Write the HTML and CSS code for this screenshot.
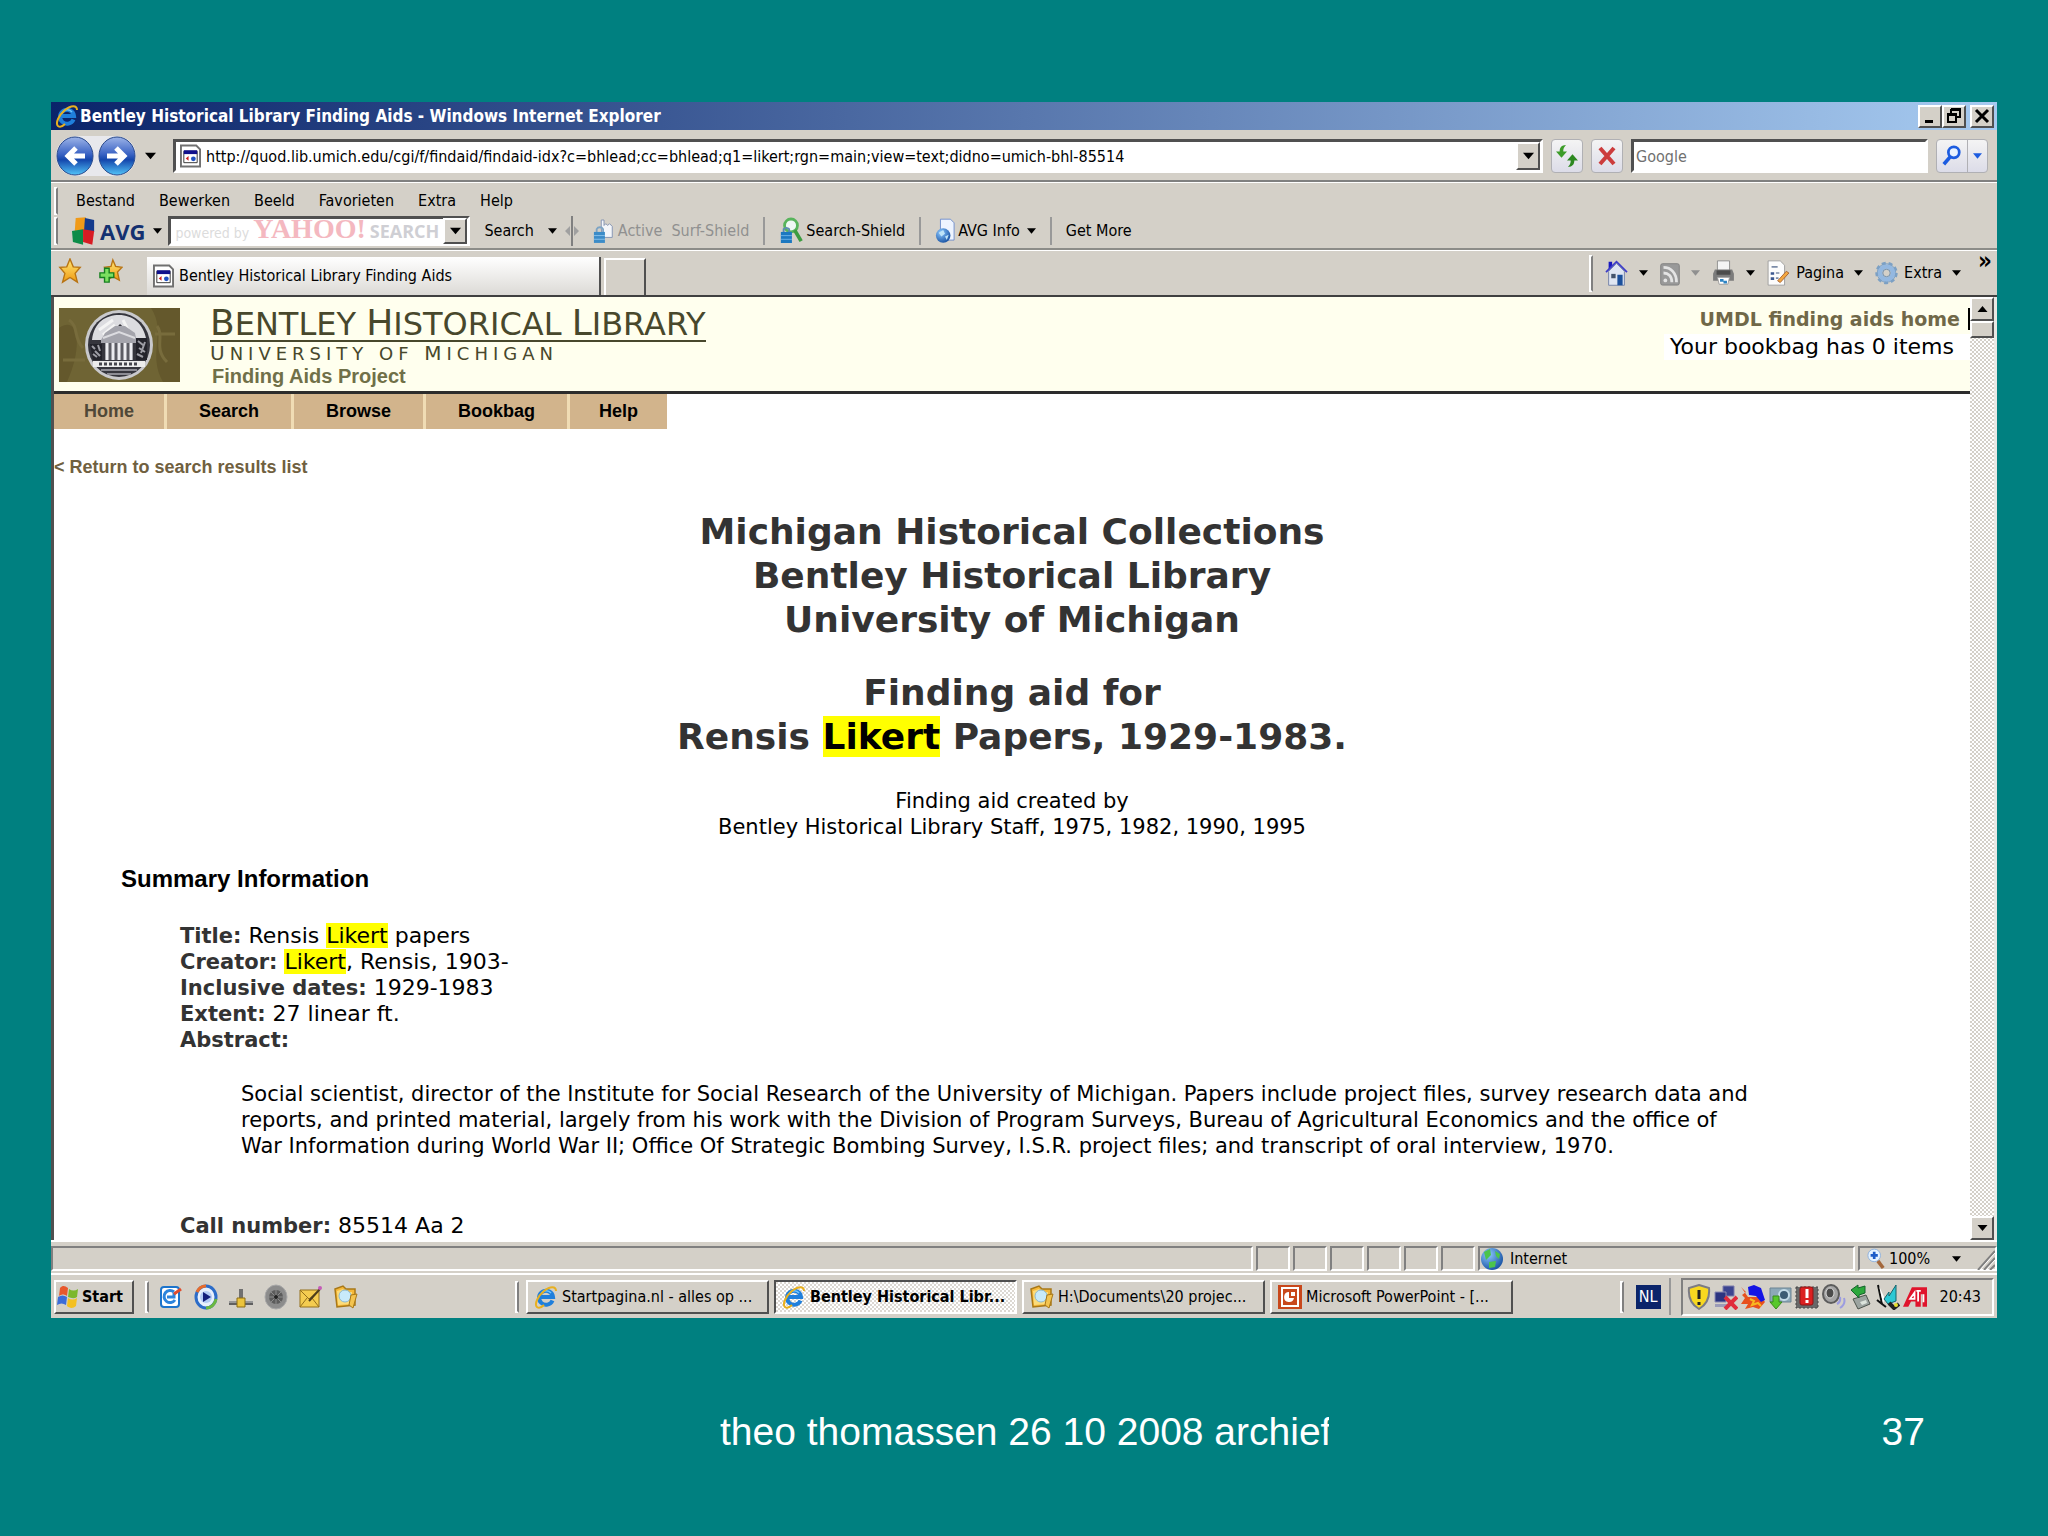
FILE: index.html
```
<!DOCTYPE html>
<html lang="nl">
<head>
<meta charset="UTF-8">
<meta name="viewport" content="width=device-width, initial-scale=1.0">
<title>Bentley Historical Library Finding Aids</title>
<link rel="stylesheet" href="styles.css">
</head>
<body>

<!-- shared icons -->
<svg class="defs" aria-hidden="true">
  <defs>
    <linearGradient id="orb" x1="0" y1="0" x2="0" y2="1">
      <stop offset="0" stop-color="#9db4e8"/>
      <stop offset="0.45" stop-color="#3a63c4"/>
      <stop offset="0.6" stop-color="#1446ac"/>
      <stop offset="1" stop-color="#52c4f8"/>
    </linearGradient>
    <linearGradient id="gold" x1="0" y1="0" x2="0" y2="1">
      <stop offset="0" stop-color="#ffe878"/>
      <stop offset="1" stop-color="#f09a10"/>
    </linearGradient>
    <radialGradient id="globe" cx="0.35" cy="0.3" r="0.8">
      <stop offset="0" stop-color="#8cc8ff"/>
      <stop offset="1" stop-color="#104a9c"/>
    </radialGradient>
  </defs>
  <symbol id="ie" viewBox="0 0 24 24">
    <path d="M18.5 15.5A7 7 0 1 1 19 12H7" fill="none" stroke="#1f7fdc" stroke-width="4"/>
    <path d="M17 8A6 6 0 0 0 7 9" fill="none" stroke="#6fc6ff" stroke-width="1.5"/>
    <path d="M22 6C22 1 16 1 10 6C4 11 0 19 3 22C5 23.500 8 22 10 20" fill="none" stroke="#e8b020" stroke-width="2"/>
  </symbol>
  <symbol id="page" viewBox="0 0 22 24">
    <path d="M1 1H17L21 5V23H1Z" fill="#fff" stroke="#707070" stroke-width="2"/>
    <path d="M4 7H18V19H4Z" fill="#fff" stroke="#333" stroke-width="1"/>
    <path d="M4 6H18V10H4Z" fill="#10108c"/>
    <path d="M9 12V17L6 14.500Z" fill="#d02020"/>
    <circle cx="14" cy="15" r="2.500" fill="#2050c0"/>
  </symbol>
  <symbol id="folder" viewBox="0 0 24 24">
    <path d="M1 4L9 1L12 4L21 4V20L3 22Z" fill="#f6b838" stroke="#a87818" stroke-width="1.500"/>
    <path d="M3 6L9 4L12 7L18 7V19L4 20Z" fill="#fbdc7c"/>
    <circle cx="11" cy="11" r="6" fill="#c8eafa" stroke="#8cb8d0"/>
    <path d="M23 9L19 23L15 20L17 10Z" fill="#f4c450" stroke="#a87818"/>
  </symbol>
  <symbol id="down" viewBox="0 0 10 6">
    <path d="M0 0H10L5 6Z" fill="currentColor"/>
  </symbol>
</svg>

<div class="window">

  <header class="titlebar">
    <svg class="icon"><use href="#ie"/></svg>
    <h1 class="window-title">Bentley Historical Library Finding Aids - Windows Internet Explorer</h1>
    <div class="window-buttons">
      <button class="raised" aria-label="Minimaliseren"><svg width="18" height="18" viewBox="0 0 18 18"><path d="M4 13H12V16H4Z"/></svg></button>
      <button class="raised" aria-label="Verkleinen"><svg width="18" height="18" viewBox="0 0 18 18"><path d="M6 2H15V10H12M6 2V6M6 3H15" fill="none" stroke="#000" stroke-width="2"/><path d="M3 7H11V15H3ZM3 8H11" fill="none" stroke="#000" stroke-width="2"/></svg></button>
      <button class="raised close" aria-label="Sluiten"><svg width="18" height="18" viewBox="0 0 18 18"><path d="M3 3L15 15M15 3L3 15" stroke="#000" stroke-width="3"/></svg></button>
    </div>
  </header>

  <div class="address-row">
    <div class="travel">
      <button aria-label="Vorige"><svg width="38" height="40" viewBox="0 0 38 40"><ellipse cx="19" cy="20" rx="18" ry="19" fill="url(#orb)" stroke="#2a4a8c"/><path d="M20 12L12 20L20 28M12 20H29" fill="none" stroke="#fff" stroke-width="5"/></svg></button>
      <button aria-label="Volgende"><svg width="38" height="40" viewBox="0 0 38 40"><ellipse cx="19" cy="20" rx="18" ry="19" fill="url(#orb)" stroke="#2a4a8c"/><path d="M18 12L26 20L18 28M26 20H9" fill="none" stroke="#fff" stroke-width="5"/></svg></button>
    </div>
    <button class="big" aria-label="Recente pagina's"><svg class="caret"><use href="#down"/></svg></button>
    <div class="sunken address">
      <svg class="page-icon"><use href="#page"/></svg>
      <input type="text" aria-label="Adres" value="http://quod.lib.umich.edu/cgi/f/findaid/findaid-idx?c=bhlead;cc=bhlead;q1=likert;rgn=main;view=text;didno=umich-bhl-85514">
      <button class="raised drop" aria-label="Adreslijst"><svg class="caret"><use href="#down"/></svg></button>
    </div>
    <button class="soft" aria-label="Vernieuwen"><svg width="22" height="24" viewBox="0 0 24 26"><path d="M11 1C8 4 8 6 8 8H12L6 15L0 8H4C4 4 6 1 11 1Z" fill="#3c9c28"/><path d="M13 25C16 22 16 20 16 18H12L18 11L24 18H20C20 22 18 25 13 25Z" fill="#2c8820"/></svg></button>
    <button class="soft" aria-label="Stoppen"><svg width="20" height="20" viewBox="0 0 20 20"><path d="M3 2L17 18M17 2L3 18" stroke="#cc3c3c" stroke-width="4"/></svg></button>
    <div class="sunken google">
      <input type="text" aria-label="Zoeken" placeholder="Google">
    </div>
    <div class="search-go">
      <button aria-label="Zoeken"><svg width="20" height="22" viewBox="0 0 22 24"><circle cx="13" cy="8" r="6" fill="#e8f2ff" stroke="#1c5ce0" stroke-width="3"/><path d="M9 13L2 21" stroke="#1c5ce0" stroke-width="4"/></svg></button>
      <button class="blue" aria-label="Zoekopties"><svg class="caret"><use href="#down"/></svg></button>
    </div>
  </div>

  <div class="toolbars">
    <nav class="menu">
      <span class="grip"></span>
      <button>Bestand</button>
      <button>Bewerken</button>
      <button>Beeld</button>
      <button>Favorieten</button>
      <button>Extra</button>
      <button>Help</button>
    </nav>
    <div class="avg-bar">
      <span class="grip"></span>
      <button class="avg">
        <svg width="24" height="30" viewBox="0 0 26 32"><path d="M4 2L15 1V15L3 16Z" fill="#f09a18"/><path d="M14 2L24 4V17H13Z" fill="#143a8c"/><path d="M0 16L12 14V31L1 28Z" fill="#0c8c48"/><path d="M12 14L24 16L22 31L12 28Z" fill="#d81c24"/></svg>
        AVG <svg class="caret"><use href="#down"/></svg>
      </button>
      <div class="sunken yahoo">
        <input type="text" id="yahoo" aria-label="Yahoo Search">
        <label for="yahoo">powered by <b>YAHOO!</b> <strong>SEARCH</strong></label>
        <button class="raised drop" aria-label="Zoekgeschiedenis"><svg class="caret"><use href="#down"/></svg></button>
      </div>
      <button class="search-btn">Search <svg class="caret"><use href="#down"/></svg></button>
      <svg class="splitter" width="14" height="30" viewBox="0 0 14 30"><path d="M7 0V30" stroke="#808080" stroke-width="2"/><path d="M5 10V20L0 15ZM9 10V20L14 15Z" fill="#a0a0a0"/></svg>
      <button class="avg-item surf" disabled><svg width="22" height="28" viewBox="0 0 24 30"><path d="M9 12V3H12V9L14 7L16 9L18 7L21 10V22H10Z" fill="#f4f6fa" stroke="#8090b0"/><path d="M4 17V13A4 4 0 0 1 11 13V17" fill="none" stroke="#7da4c4" stroke-width="2"/><path d="M1 16H13V28H1Z" fill="#3c8cc8"/><path d="M1 20H13M1 24H13" stroke="#8cc4ec"/></svg>Active&nbsp; Surf-Shield</button>
      <button class="avg-item"><svg width="24" height="28" viewBox="0 0 26 30"><circle cx="13" cy="9" r="7" fill="#eef8f4" stroke="#58b45c" stroke-width="3"/><path d="M17 14L24 26" stroke="#3c9c40" stroke-width="4"/><path d="M5 17V13A4 4 0 0 1 11 13V17" fill="none" stroke="#5c8cb4" stroke-width="2"/><path d="M2 16H14V28H2Z" fill="#1c78c0"/><path d="M2 20H14M2 24H14" stroke="#6cb4e8"/></svg>Search-Shield</button>
      <button class="avg-item"><svg width="20" height="28" viewBox="0 0 22 30"><path d="M6 2H17L21 6V25H6Z" fill="#eef4ff" stroke="#6c8ccc"/><circle cx="9" cy="20" r="8" fill="url(#globe)"/><path d="M4 17L9 14L11 18L7 21ZM11 21L15 19L13 25Z" fill="#bfe4f8"/></svg>AVG Info <svg class="caret"><use href="#down"/></svg></button>
      <button class="avg-item">Get More</button>
    </div>
  </div>

  <div class="tab-row">
    <div class="favorites">
      <button aria-label="Favorieten"><svg width="24" height="26" viewBox="0 0 24 28"><path d="M12 1L15.500 9.500L23 10L17.500 16.500L20 26L12 21L4 26L6.500 16.500L1 10L8.500 9.500Z" fill="url(#gold)" stroke="#b87414" stroke-width="1.500"/></svg></button>
      <button aria-label="Toevoegen"><svg width="24" height="26" viewBox="0 0 26 28"><path d="M15 2L18 9L25 10L20 15L22 24L15 20L9 24L10 15L6 10L13 9Z" fill="url(#gold)" stroke="#b87414" stroke-width="1.500"/><path d="M6 11H11V16H16V21H11V26H6V21H1V16H6Z" fill="#7ce060" stroke="#168020" stroke-width="1.500"/></svg></button>
    </div>
    <button class="tab"><svg class="page-icon"><use href="#page"/></svg>Bentley Historical Library Finding Aids</button>
    <button class="new-tab" aria-label="Nieuw tabblad"></button>
    <div class="commands">
      <span class="grip"></span>
      <button aria-label="Startpagina"><svg width="25" height="28" viewBox="0 0 26 32"><path d="M4 3H8V9L4 12Z" fill="#1818c0"/><path d="M4 14L13 5L22 14V30H4Z" fill="#dfe6f2" stroke="#6c7ca4"/><path d="M1 15L13 3L25 15" fill="none" stroke="#3c3cc8" stroke-width="2"/><path d="M14 18H20V30H14Z" fill="#1c509c"/><path d="M7 17H12V22H7Z" fill="#44546c"/></svg><svg class="caret"><use href="#down"/></svg></button>
      <button class="feeds" aria-label="Feeds" disabled><svg width="22" height="26" viewBox="0 0 22 28"><rect x="1" y="4" width="20" height="23" rx="2" fill="#999" stroke="#808080"/><circle cx="6" cy="22" r="2" fill="#e4e4e4"/><path d="M4 14C9 14 13 17 13 24M4 8C12 8 18 14 18 24" fill="none" stroke="#e4e4e4" stroke-width="3"/></svg><svg class="caret"><use href="#down"/></svg></button>
      <button aria-label="Afdrukken"><svg width="25" height="26" viewBox="0 0 26 30"><path d="M6 1H20V12H6Z" fill="#f4f4f4" stroke="#888"/><path d="M3 11H23L25 16V24H1V16Z" fill="#7c7c7c"/><path d="M5 12H21V17H5Z" fill="#4c4c4c"/><path d="M6 20H20L18 28H8Z" fill="#fff" stroke="#999"/><path d="M9 22H13V25H9ZM13 24H17V27H13Z" fill="#2c84c4"/></svg><svg class="caret"><use href="#down"/></svg></button>
      <button><svg width="25" height="26" viewBox="0 0 26 30"><path d="M1 1H15L20 6V29H1Z" fill="#fcfcfc" stroke="#999"/><path d="M4 14H8V17H4ZM4 20H8V23H4Z" fill="#3c5890"/><path d="M10 15H14M10 21H13M5 8H12" stroke="#7c8ca8" stroke-width="2"/><path d="M12 24L22 13L25 15L15 26Z" fill="#f4a840" stroke="#a45c28"/></svg>Pagina <svg class="caret"><use href="#down"/></svg></button>
      <button><svg width="25" height="28" viewBox="0 0 26 30"><circle cx="13" cy="15" r="10" fill="none" stroke="#7ca0c4" stroke-width="4" stroke-dasharray="4 3"/><circle cx="13" cy="15" r="7" fill="#d4d0c8" stroke="#94b8e0" stroke-width="5"/><circle cx="13" cy="15" r="10" fill="none" stroke="#7ca0c4"/><circle cx="13" cy="15" r="4" fill="#d4d0c8" stroke="#6c8cac"/></svg>Extra <svg class="caret"><use href="#down"/></svg></button>
      <button class="more">»</button>
    </div>
  </div>

  <div class="viewport">
    <main class="page">
      <div class="masthead">
        <svg class="seal" width="121" height="74" viewBox="0 0 121 74">
          <path d="M0 0H121V74H0Z" fill="#6f6434"/>
          <path d="M0 20C20 6 24 40 8 74H0ZM92 0C108 24 88 46 104 74H121V0Z" fill="#64582c"/>
          <path d="M10 12C20 18 14 30 24 40M98 18C106 28 94 40 108 54M4 52H26M96 26H116" fill="none" stroke="#786c3c" stroke-width="3"/>
          <ellipse cx="60" cy="37" rx="34" ry="35" fill="#c9c9cc"/>
          <ellipse cx="60" cy="37" rx="31" ry="32" fill="#35353d"/>
          <path d="M33 32C35 14 47 7 60 7C74 7 84 16 87 30L76 30L61 16L46 32Z" fill="#dcdce0"/>
          <path d="M40 22L54 12M64 12L70 24M44 27L56 17" stroke="#f4f4f4" stroke-width="3"/>
          <path d="M42 32L46 25L56 18H66L76 25L78 35H42Z" fill="#a4a4ac"/>
          <path d="M44 30L60 24L76 30" fill="none" stroke="#dcdce0" stroke-width="2"/>
          <path d="M46 35H74V52H46Z" fill="#5c5c64"/>
          <path d="M48 35V52M54 35V52M60 35V52M66 35V52M72 35V52" stroke="#ececf0" stroke-width="3"/>
          <path d="M31 36H43V52H34ZM77 30H88V52H77Z" fill="#23232b"/>
          <path d="M33 38L36 41M39 37L41 43M34 46L38 49M79 33L84 37M86 34L82 45M78 46L84 49M36 43L41 48M80 40L86 44" stroke="#9c9ca4" stroke-width="2"/>
          <path d="M34 53H86V59H34Z" fill="#ececec"/>
          <path d="M40 56H80" stroke="#44444c" stroke-width="3" stroke-dasharray="3 2"/>
          <path d="M42 62H78M48 66H72" stroke="#8c8c94" stroke-width="2"/>
        </svg>
        <div class="brand">
          <a class="brand-name" href="#"><span>B</span>ENTLEY <span>H</span>ISTORICAL <span>L</span>IBRARY</a>
          <div class="brand-sub"><span>U</span>NIVERSITY OF <span>M</span>ICHIGAN</div>
          <div class="brand-project">Finding Aids Project</div>
        </div>
        <div class="account">
          <a href="#">UMDL finding aids home</a>
          <p>Your bookbag has 0 items</p>
        </div>
      </div>

      <nav class="site-nav">
        <a class="current" href="#">Home</a>
        <a href="#">Search</a>
        <a href="#">Browse</a>
        <a href="#">Bookbag</a>
        <a href="#">Help</a>
      </nav>

      <a class="return" href="#">&lt; Return to search results list</a>

      <div class="heading">
        <h2>Michigan Historical Collections<br>Bentley Historical Library<br>University of Michigan</h2>
        <h2>Finding aid for<br>Rensis <mark>Likert</mark> Papers, 1929-1983.</h2>
        <p>Finding aid created by<br>Bentley Historical Library Staff, 1975, 1982, 1990, 1995</p>
      </div>

      <h3>Summary Information</h3>
      <div class="summary">
        <div><b>Title:</b> Rensis <mark>Likert</mark> papers</div>
        <div><b>Creator:</b> <mark>Likert</mark>, Rensis, 1903-</div>
        <div><b>Inclusive dates:</b> 1929-1983</div>
        <div><b>Extent:</b> 27 linear ft.</div>
        <div><b>Abstract:</b></div>
        <p>Social scientist, director of the Institute for Social Research of the University of Michigan. Papers include project files, survey research data and reports, and printed material, largely from his work with the Division of Program Surveys, Bureau of Agricultural Economics and the office of War Information during World War II; Office Of Strategic Bombing Survey, I.S.R. project files; and transcript of oral interview, 1970.</p>
        <div><b>Call number:</b> 85514 Aa 2</div>
      </div>
    </main>
    <div class="scrollbar">
      <button class="raised" aria-label="Omhoog"><svg class="caret up"><use href="#down"/></svg></button>
      <div class="raised thumb"></div>
      <button class="raised last" aria-label="Omlaag"><svg class="caret"><use href="#down"/></svg></button>
    </div>
  </div>

  <footer class="statusbar">
    <div class="pane wide"></div>
    <div class="pane small"></div>
    <div class="pane small"></div>
    <div class="pane small"></div>
    <div class="pane small"></div>
    <div class="pane small"></div>
    <div class="pane small"></div>
    <div class="pane zone"><svg width="24" height="24" viewBox="0 0 24 24"><circle cx="12" cy="12" r="11" fill="url(#globe)"/><path d="M4 5L10 2L11 8L6 13ZM15 4L20 7L19 12L16 9ZM9 15L16 14L15 20L9 21Z" fill="#4cc44c"/></svg>Internet</div>
    <div class="pane zoom"><svg width="18" height="22" viewBox="0 0 20 24"><path d="M12 14L18 22" stroke="#a4683c" stroke-width="4"/><circle cx="8" cy="8" r="7" fill="#e4f2ff" stroke="#8cb0dc"/><path d="M8 4V12M4 8H12" stroke="#1c5cc8" stroke-width="3"/></svg><button>100% <svg class="caret"><use href="#down"/></svg></button><svg class="resize" width="18" height="22" viewBox="0 0 18 22"><path d="M1 22L18 3M7 22L18 10M13 22L18 17" stroke="#808080" stroke-width="2"/><path d="M3 22L18 5M9 22L18 12" stroke="#fff"/></svg></div>
  </footer>

  <div class="taskbar">
    <button class="raised start"><svg width="24" height="26" viewBox="0 0 24 26"><path d="M4 4C7 1 9 2 12 4L11 12C8 10 6 10 3 12Z" fill="#e8582c"/><path d="M13 5C16 7 19 7 22 5L21 13C18 15 15 14 12 13Z" fill="#7cb82c"/><path d="M2 13C5 11 8 11 11 13L10 21C7 19 4 19 1 21Z" fill="#3c6cd8"/><path d="M12 14C15 16 18 16 21 14L20 22C17 25 13 24 11 22Z" fill="#f4c020"/></svg>Start</button>
    <span class="grip"></span>
    <div class="quick">
      <button aria-label="Bureaublad"><svg width="24" height="26" viewBox="0 0 24 26"><rect x="2" y="3" width="18" height="20" rx="3" fill="#fff" stroke="#1c74cc" stroke-width="2"/><path d="M15 8A6 6 0 1 0 16 16M8 13H15V9" fill="none" stroke="#2c84dc" stroke-width="3"/><path d="M15 10L22 5" stroke="#e04c2c" stroke-width="3"/></svg></button>
      <button aria-label="Media Player"><svg width="24" height="26" viewBox="0 0 24 26"><ellipse cx="12" cy="13" rx="10" ry="11" fill="#e8f0fc" stroke="#2c6cc8" stroke-width="3"/><path d="M3 8A10 11 0 0 1 12 2" fill="none" stroke="#e86c2c" stroke-width="3"/><path d="M12 24A10 11 0 0 0 22 15" fill="none" stroke="#6cb840" stroke-width="3"/><circle cx="12" cy="13" r="6" fill="#b4ccf4"/><path d="M9 8L17 13L9 18Z" fill="#14207c"/></svg></button>
      <button aria-label="Netwerk"><svg width="24" height="26" viewBox="0 0 24 26"><path d="M12 5V15" stroke="#707070" stroke-width="4"/><path d="M0 19H24" stroke="#606060" stroke-width="4"/><path d="M0 18H24" stroke="#d0d0d0"/><path d="M8 14H16V23H8Z" fill="#ecc43c" stroke="#8c6c14"/></svg></button>
      <button aria-label="Geluid"><svg width="24" height="26" viewBox="0 0 24 26"><ellipse cx="12" cy="13" rx="11" ry="12" fill="#8c8c8c" stroke="#a8a8a8"/><circle cx="12" cy="13" r="7" fill="#5c5c5c"/><path d="M12 6V20M5 13H19M7 8L17 18M17 8L7 18" stroke="#8c8c8c"/><circle cx="12" cy="13" r="2" fill="#222"/></svg></button>
      <button aria-label="Mail"><svg width="24" height="26" viewBox="0 0 24 26"><path d="M1 6H20V23H1Z" fill="#f4cc50" stroke="#94701c"/><path d="M1 6L10 15L20 6M1 23L8 14M20 23L13 14" fill="none" stroke="#94701c"/><path d="M10 17L21 5" stroke="#4c3c1c" stroke-width="2"/><circle cx="21" cy="4" r="2" fill="#c45cb8"/></svg></button>
      <button aria-label="Map"><svg width="24" height="26"><use href="#folder"/></svg></button>
    </div>
    <span class="grip"></span>
    <div class="tasks">
      <button class="raised"><svg class="icon"><use href="#ie"/></svg>Startpagina.nl - alles op ...</button>
      <button class="active"><svg class="icon"><use href="#ie"/></svg>Bentley Historical Libr...</button>
      <button class="raised"><svg class="icon"><use href="#folder"/></svg>H:\Documents\20 projec...</button>
      <button class="raised"><svg class="icon" viewBox="0 0 24 24"><path d="M0 0H24V24H0Z" fill="#c8481c"/><path d="M4 3H20V21H4Z" fill="none" stroke="#fff" stroke-width="2"/><path d="M11 7A5 5 0 1 0 16 13H11Z" fill="#fff"/><path d="M13 7H17V11H13Z" fill="#fff"/></svg>Microsoft PowerPoint - [...</button>
    </div>
    <span class="grip"></span>
    <span class="lang">NL</span>
    <span class="divider"></span>
    <div class="tray">
      <svg viewBox="0 0 24 26"><path d="M12 1L22 4C23 14 19 21 12 25C5 21 1 14 2 4Z" fill="#f8d820" stroke="#7c7c84" stroke-width="2"/><path d="M12 6V15M12 18V21" stroke="#222" stroke-width="3"/></svg>
      <svg viewBox="0 0 24 26"><path d="M9 2H20V12H9Z" fill="#3c4490" stroke="#7c7cac"/><path d="M1 8H12V18H1Z" fill="#2c3480" stroke="#8c8cb4"/><path d="M1 20H13V23H1Z" fill="#9c9cb8"/><path d="M11 13L23 25M23 13L11 25" stroke="#e02c3c" stroke-width="4"/></svg>
      <svg viewBox="0 0 24 26"><path d="M0 3L5 8L1 11L4 14L0 20L7 20L4 25L12 23L18 25L24 18L20 13H7Z" fill="#e8501c"/><path d="M7 3L13 1L20 4L24 16L20 18L15 12L8 11Z" fill="#1414e4"/><path d="M9 15L13 17L11 21L17 19L20 22" fill="none" stroke="#f8b820" stroke-width="2"/></svg>
      <svg viewBox="0 0 24 26"><path d="M2 4H23V18H2Z" fill="#8ca8b8" stroke="#6c8494"/><circle cx="16" cy="11" r="5" fill="#3c5c74" stroke="#c4dce8" stroke-width="2"/><path d="M5 12H11V18H14L8 25L2 18H5Z" fill="#58c82c" stroke="#388c1c"/></svg>
      <svg viewBox="0 0 24 26"><path d="M1 3H23V24H1Z" fill="#686868" stroke="#484848" stroke-dasharray="2 2"/><rect x="5" y="3" width="13" height="18" rx="2" fill="#dc2020" stroke="#8c1414"/><path d="M12 5V14M12 16V19" stroke="#fff" stroke-width="3"/></svg>
      <svg viewBox="0 0 24 26"><ellipse cx="9" cy="10" rx="8" ry="9" fill="#a4a4a4" stroke="#5c5c5c" stroke-width="2"/><ellipse cx="8" cy="9" rx="4" ry="5" fill="#4c4c4c" stroke="#dcdcdc"/><path d="M15 20Q19 18 18 13M18 24Q24 20 22 14" fill="none" stroke="#9c9ce0" stroke-width="2"/></svg>
      <svg viewBox="0 0 24 26"><path d="M4 15L17 11L21 20L9 25Z" fill="#9ca4a0" stroke="#4c544c"/><path d="M11 18L17 16L18 19L13 21Z" fill="#dce4dc"/><path d="M2 6L9 1V4L16 2V9L10 11V14Z" fill="#2ca83c" stroke="#14642c"/></svg>
      <svg viewBox="0 0 24 26"><path d="M2 1L6 20L10 23M1 16L6 20" fill="none" stroke="#111" stroke-width="2"/><path d="M3 2L9 15L7 19" fill="#fff"/><path d="M20 1V17L12 20L8 15L13 8V12Z" fill="#2cc8d4" stroke="#14646c"/><path d="M13 19L18 24L23 20" fill="none" stroke="#222" stroke-width="4"/><circle cx="20" cy="21" r="2" fill="#e8e02c"/></svg>
      <svg viewBox="0 0 27 26"><path d="M10 2H27V24H22V10H20V24H14V18H9L6 24H0Z" fill="#e0142c"/><path d="M8 15L13 8V15ZM15 6H20M17 6V18M23 10V19" fill="none" stroke="#fff" stroke-width="2"/></svg>
      <time>20:43</time>
    </div>
  </div>
</div>

<div class="slide-footer">
  <span></span>
  <p>theo thomassen 26 10 2008 archief</p>
  <span class="slide-number">37</span>
</div>

</body>
</html>
```
FILE: styles.css
```
* {
  box-sizing: border-box;
}

body {
  margin: 0;
  min-height: 100vh;
  padding: 102px 51px 0;
  background-color: #008080;
  overflow: hidden;
  font-family: "DejaVu Sans Condensed", "DejaVu Sans", sans-serif;
  font-size: 16px;
  line-height: 20px;
  color: #000;
}

button,
input {
  font: inherit;
  color: inherit;
  background: none;
  border: 0;
  padding: 0;
  margin: 0;
}

button {
  display: flex;
  align-items: center;
  white-space: nowrap;
}

input {
  min-width: 0;
  outline: 0;
}

svg {
  display: block;
  flex: none;
}

.defs {
  position: absolute;
  width: 0;
  height: 0;
}

.icon {
  width: 24px;
  height: 24px;
}

.page-icon {
  width: 21px;
  height: 28px;
}

.caret {
  width: 9px;
  height: 6px;
}

.grip {
  flex: none;
  width: 4px;
  border: 2px solid #fff;
  border-right-color: #808080;
}

.raised {
  background-color: #d4d0c8;
  border: 2px solid;
  border-color: #fff #505050 #505050 #fff;
}

.sunken {
  display: flex;
  align-items: center;
  height: 34px;
  background-color: #fff;
  border: 3px solid;
  border-color: #505050 #fff #fff #505050;
}

.window {
  background-color: #d4d0c8;
}

/* title bar */
.titlebar {
  display: flex;
  align-items: center;
  height: 28px;
  padding: 0 3px 0 4px;
  background: linear-gradient(to right, #0a246a, #a6caf0);
}

.window-title {
  flex: 1;
  margin: 0 0 0 1px;
  font-size: 17px;
  color: #fff;
}

.window-buttons {
  display: flex;
}

.window-buttons button {
  width: 24px;
  height: 23px;
  justify-content: center;
}

.window-buttons .close {
  margin-left: 4px;
}

/* address row */
.address-row {
  display: flex;
  align-items: center;
  gap: 8px;
  height: 52px;
  padding: 2px 9px 0 5px;
  border-bottom: 2px solid #808080;
}

.travel {
  display: flex;
  gap: 4px;
  border-radius: 20px;
  background-color: #e8e8ec;
}

.big {
  padding: 0 8px 0 1px;
}

.big .caret {
  width: 11px;
  height: 8px;
}

.address {
  flex: 1;
  padding-left: 4px;
  margin-left: 1px;
}

.address input {
  flex: 1;
  padding: 2px 0 0 5px;
}

.drop {
  width: 24px;
  height: 28px;
  justify-content: center;
}

.drop .caret {
  width: 11px;
  height: 8px;
}

.soft,
.search-go {
  width: 32px;
  height: 34px;
  justify-content: center;
  border: 1px solid #b0b0b4;
  border-radius: 4px;
  background: linear-gradient(#f4f4f4, #dcdce8);
}

.google {
  width: 297px;
}

.google input {
  width: 100%;
  padding: 2px 0 0 2px;
}

.google input::placeholder {
  color: #707070;
  opacity: 1;
}

.search-go {
  display: flex;
  width: 52px;
}

.search-go button {
  flex: 1;
  justify-content: center;
}

.search-go .blue {
  flex: 0 0 20px;
  color: #1c5ce0;
  border-left: 1px solid #b0b0b4;
}

/* menu and AVG toolbar */
.toolbars {
  padding: 3px 0 0 3px;
  height: 68px;
  border-top: 1px solid #fff;
  border-bottom: 2px solid #8c8c88;
}

.menu {
  display: flex;
  gap: 24px;
  height: 29px;
  align-items: center;
}

.menu .grip,
.avg-bar .grip {
  height: 28px;
}

.menu .grip {
  margin-right: -6px;
}

.avg-bar {
  display: flex;
  align-items: center;
  height: 32px;
}

.avg {
  margin: 0 6px 0 14px;
  gap: 4px;
  font-family: "Open Sans", sans-serif;
  font-size: 22px;
  font-weight: bold;
  color: #143070;
}

.avg .caret {
  margin-left: 4px;
  color: #000;
}

.yahoo {
  position: relative;
  flex: 0 0 302px;
  height: 30px;
}

.yahoo input {
  flex: 1;
}

.yahoo .drop {
  height: 26px;
}

.yahoo label {
  position: absolute;
  left: 4px;
  white-space: nowrap;
  font-size: 14px;
  color: #dcdcdc;
}

.yahoo b {
  font-family: "Liberation Serif", serif;
  font-size: 28px;
  color: #f4b8c0;
}

.yahoo strong {
  font-family: "Open Sans", sans-serif;
  font-size: 18px;
  color: #cfcfd4;
}

.search-btn {
  margin: 0 8px 0 14px;
  gap: 14px;
}

.avg-item {
  height: 28px;
  gap: 3px;
  padding: 0 14px;
  border-right: 2px solid #999;
}

.avg-item .caret {
  margin-left: 4px;
}

.avg-item:last-child {
  border: 0;
}

.surf {
  color: #909090;
}

/* tabs and command bar */
.tab-row {
  display: flex;
  align-items: flex-end;
  height: 47px;
  border-top: 1px solid #fff;
  border-bottom: 2px solid #404040;
}

.favorites {
  display: flex;
  gap: 17px;
  width: 96px;
  padding: 0 0 11px 7px;
}

.tab {
  width: 454px;
  height: 38px;
  padding: 0 6px;
  gap: 5px;
  background: linear-gradient(#fff, #dcdad6);
  border-right: 2px solid #505050;
}

.new-tab {
  width: 42px;
  height: 37px;
  margin-left: 3px;
  border: 2px solid #fff;
  border-right-color: #505050;
  border-bottom: 0;
}

.commands {
  flex: 1;
  display: flex;
  align-items: center;
  justify-content: flex-end;
  gap: 11px;
  height: 44px;
  padding-right: 5px;
}

.commands .grip {
  height: 37px;
}

.commands button {
  gap: 5px;
}

.commands .caret {
  margin-left: 5px;
}

.feeds {
  color: #909090;
}

.commands .more {
  align-self: flex-start;
  margin-left: 6px;
  font-size: 24px;
  font-weight: bold;
}

/* web page */
.viewport {
  display: flex;
  border-left: 3px solid #505050;
  border-right: 3px solid #e8e8e4;
}

.page {
  flex: 1;
  min-width: 0;
  padding-bottom: 1px;
  background-color: #fff;
  font-family: "DejaVu Sans", sans-serif;
  font-size: 22px;
  line-height: 26px;
}

.page a {
  text-decoration: none;
}

.masthead {
  display: flex;
  height: 97px;
  padding-left: 5px;
  background-color: #ffffee;
  border-bottom: 3px solid #2c2c2c;
}

.seal {
  margin-top: 11px;
}

.brand {
  flex: 1;
  padding: 10px 0 0 30px;
  color: #48482c;
}

.brand-name {
  display: block;
  width: max-content;
  border-bottom: 2px solid #48482c;
  font-size: 32px;
  line-height: 32px;
  color: #48482c;
}

.brand-name span {
  font-size: 36px;
}

.brand-sub {
  font-size: 18px;
  line-height: 22px;
  letter-spacing: 5px;
}

.brand-sub span {
  font-size: 20px;
}

.brand-project {
  padding-left: 2px;
  font-family: "Liberation Sans", sans-serif;
  font-size: 20px;
  font-weight: bold;
  line-height: 22px;
  color: #707048;
}

.account {
  padding-top: 9px;
  text-align: right;
}

.account a {
  padding-right: 8px;
  border-right: 2px solid #000;
  font-size: 19px;
  font-weight: bold;
  color: #706848;
}

.account p {
  margin: 2px 0 0;
  padding: 0 16px 0 6px;
  background-color: #fff;
}

.site-nav {
  display: flex;
  gap: 3px;
  width: max-content;
  background-color: #f0dcb4;
}

.site-nav a {
  padding: 0 32px;
  background-color: #d2b48c;
  font-family: "Liberation Sans", sans-serif;
  font-size: 18px;
  font-weight: bold;
  line-height: 35px;
  color: #000;
}

.site-nav a:last-child {
  padding: 0 29px;
}

.site-nav .current {
  padding: 0 30px;
  color: #504838;
}

.return {
  display: block;
  margin-top: 25px;
  font-family: "Liberation Sans", sans-serif;
  font-size: 18px;
  font-weight: bold;
  color: #706040;
}

.heading {
  margin-top: 30px;
  text-align: center;
}

.heading h2 {
  margin: 0 0 29px;
  font-size: 36px;
  line-height: 44px;
  color: #333;
}

.heading p {
  margin: 0;
  font-size: 21px;
}

mark {
  background-color: #ff0;
  color: #000;
}

.page h3 {
  margin: 26px 0 0 67px;
  font-family: "Liberation Sans", sans-serif;
  font-size: 24px;
}

.summary {
  margin: 31px 183px 0 126px;
}

.summary b {
  font-size: 21px;
  color: #333;
}

.summary p {
  margin: 28px 29px 54px 61px;
  font-size: 21px;
}

.scrollbar {
  display: flex;
  flex-direction: column;
  width: 24px;
  background: repeating-conic-gradient(#fff 0 25%, #d4d0c8 0 50%) 0 0 / 4px 4px;
}

.scrollbar button {
  height: 24px;
  justify-content: center;
}

.scrollbar .caret {
  width: 11px;
}

.scrollbar .up {
  transform: rotate(180deg);
}

.scrollbar .thumb {
  height: 17px;
}

.scrollbar .last {
  margin-top: auto;
}

/* status bar */
.statusbar {
  display: flex;
  gap: 3px;
  height: 35px;
  padding: 4px 0 2px;
  border-top: 2px solid #fff;
  border-bottom: 2px solid #fff;
}

.pane {
  display: flex;
  align-items: center;
  border: 2px solid;
  border-color: #808080 #fff #fff #808080;
}

.wide {
  flex: 1;
}

.small {
  width: 34px;
}

.zone {
  width: 377px;
  gap: 6px;
}

.zoom {
  width: 139px;
  gap: 4px;
  padding-left: 7px;
}

.zoom .caret {
  margin-left: 22px;
}

.resize {
  margin-left: auto;
}

/* task bar */
.taskbar {
  display: flex;
  align-items: center;
  height: 43px;
  padding: 0 3px;
}

.taskbar .grip {
  height: 32px;
}

.start {
  height: 34px;
  width: 80px;
  margin-right: 11px;
  gap: 2px;
  font-weight: bold;
}

.quick {
  display: flex;
  gap: 11px;
  width: 366px;
  padding-left: 10px;
}

.tasks {
  flex: 1;
  display: flex;
  gap: 5px;
  padding-left: 7px;
}

.tasks button {
  flex: 0 1 243px;
  height: 34px;
  padding: 0 6px;
  gap: 4px;
}

.tasks .active {
  border: 2px solid;
  border-color: #505050 #fff #fff #505050;
  background: repeating-conic-gradient(#fff 0 25%, #dcd8d2 0 50%) 0 0 / 4px 4px;
  font-weight: bold;
}

.lang {
  margin: 0 8px 0 12px;
  padding: 2px 3px;
  background-color: #0a246a;
  color: #fff;
}

.divider {
  width: 2px;
  height: 37px;
  margin-right: 10px;
  background-color: #999;
}

.tray {
  display: flex;
  align-items: center;
  gap: 3px;
  height: 38px;
  padding: 0 11px 0 4px;
  border: 2px solid;
  border-color: #808080 #fff #fff #808080;
}

.tray svg {
  width: 24px;
  height: 26px;
}

.tray time {
  margin-left: 10px;
}

/* slide footer */
.slide-footer {
  display: grid;
  grid-template-columns: 669px 609px 1fr;
  margin-top: 92px;
  font-family: "Liberation Sans", sans-serif;
  font-size: 39px;
  line-height: 44px;
  color: #fff;
}

.slide-footer p {
  margin: 0;
  overflow: hidden;
  white-space: nowrap;
}

.slide-number {
  padding-right: 72px;
  text-align: right;
}
```
